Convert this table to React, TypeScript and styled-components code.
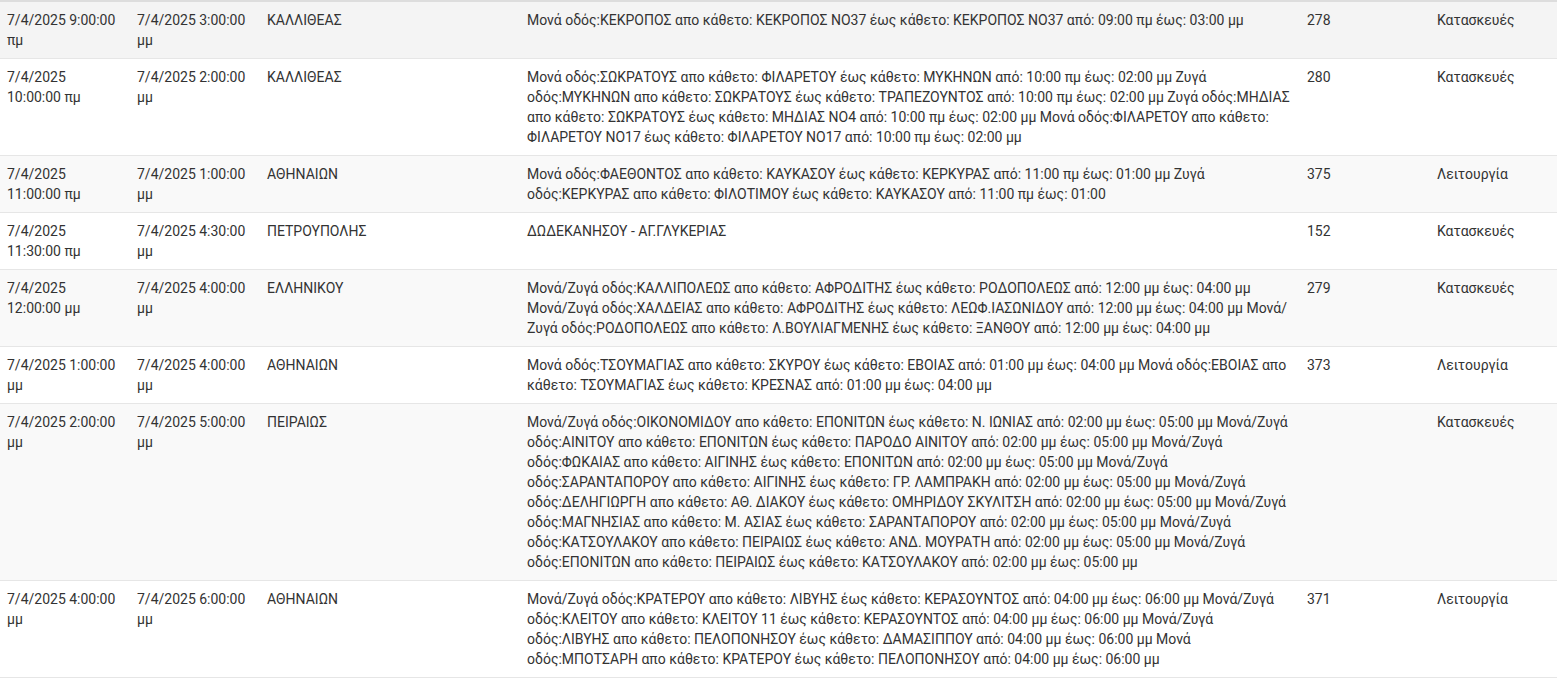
import styled, { createGlobalStyle } from 'styled-components'

const GlobalStyle = createGlobalStyle`
  html, body {
    margin: 0;
    padding: 0;
    background: #fff;
  }
  body {
    font-family: Roboto, "Noto Sans", "Liberation Sans", sans-serif;
    font-size: 14px;
    line-height: 20px;
    color: #333;
  }
`

type Closure = {
  start: string
  end: string
  area: string
  streets: string
  code: string
  type: string
}

const closures: Closure[] = [
  {
    start: '7/4/2025 9:00:00 πμ',
    end: '7/4/2025 3:00:00 μμ',
    area: 'ΚΑΛΛΙΘΕΑΣ',
    streets: 'Μονά οδός:ΚΕΚΡΟΠΟΣ απο κάθετο: ΚΕΚΡΟΠΟΣ ΝΟ37 έως κάθετο: ΚΕΚΡΟΠΟΣ ΝΟ37 από: 09:00 πμ έως: 03:00 μμ',
    code: '278',
    type: 'Κατασκευές',
  },
  {
    start: '7/4/2025 10:00:00 πμ',
    end: '7/4/2025 2:00:00 μμ',
    area: 'ΚΑΛΛΙΘΕΑΣ',
    streets: 'Μονά οδός:ΣΩΚΡΑΤΟΥΣ απο κάθετο: ΦΙΛΑΡΕΤΟΥ έως κάθετο: ΜΥΚΗΝΩΝ από: 10:00 πμ έως: 02:00 μμ Ζυγά οδός:ΜΥΚΗΝΩΝ απο κάθετο: ΣΩΚΡΑΤΟΥΣ έως κάθετο: ΤΡΑΠΕΖΟΥΝΤΟΣ από: 10:00 πμ έως: 02:00 μμ Ζυγά οδός:ΜΗΔΙΑΣ απο κάθετο: ΣΩΚΡΑΤΟΥΣ έως κάθετο: ΜΗΔΙΑΣ ΝΟ4 από: 10:00 πμ έως: 02:00 μμ Μονά οδός:ΦΙΛΑΡΕΤΟΥ απο κάθετο: ΦΙΛΑΡΕΤΟΥ ΝΟ17 έως κάθετο: ΦΙΛΑΡΕΤΟΥ ΝΟ17 από: 10:00 πμ έως: 02:00 μμ',
    code: '280',
    type: 'Κατασκευές',
  },
  {
    start: '7/4/2025 11:00:00 πμ',
    end: '7/4/2025 1:00:00 μμ',
    area: 'ΑΘΗΝΑΙΩΝ',
    streets: 'Μονά οδός:ΦΑΕΘΟΝΤΟΣ απο κάθετο: ΚΑΥΚΑΣΟΥ έως κάθετο: ΚΕΡΚΥΡΑΣ από: 11:00 πμ έως: 01:00 μμ Ζυγά οδός:ΚΕΡΚΥΡΑΣ απο κάθετο: ΦΙΛΟΤΙΜΟΥ έως κάθετο: ΚΑΥΚΑΣΟΥ από: 11:00 πμ έως: 01:00',
    code: '375',
    type: 'Λειτουργία',
  },
  {
    start: '7/4/2025 11:30:00 πμ',
    end: '7/4/2025 4:30:00 μμ',
    area: 'ΠΕΤΡΟΥΠΟΛΗΣ',
    streets: 'ΔΩΔΕΚΑΝΗΣΟΥ - ΑΓ.ΓΛΥΚΕΡΙΑΣ',
    code: '152',
    type: 'Κατασκευές',
  },
  {
    start: '7/4/2025 12:00:00 μμ',
    end: '7/4/2025 4:00:00 μμ',
    area: 'ΕΛΛΗΝΙΚΟΥ',
    streets: 'Μονά/Ζυγά οδός:ΚΑΛΛΙΠΟΛΕΩΣ απο κάθετο: ΑΦΡΟΔΙΤΗΣ έως κάθετο: ΡΟΔΟΠΟΛΕΩΣ από: 12:00 μμ έως: 04:00 μμ Μονά/Ζυγά οδός:ΧΑΛΔΕΙΑΣ απο κάθετο: ΑΦΡΟΔΙΤΗΣ έως κάθετο: ΛΕΩΦ.ΙΑΣΩΝΙΔΟΥ από: 12:00 μμ έως: 04:00 μμ Μονά/Ζυγά οδός:ΡΟΔΟΠΟΛΕΩΣ απο κάθετο: Λ.ΒΟΥΛΙΑΓΜΕΝΗΣ έως κάθετο: ΞΑΝΘΟΥ από: 12:00 μμ έως: 04:00 μμ',
    code: '279',
    type: 'Κατασκευές',
  },
  {
    start: '7/4/2025 1:00:00 μμ',
    end: '7/4/2025 4:00:00 μμ',
    area: 'ΑΘΗΝΑΙΩΝ',
    streets: 'Μονά οδός:ΤΣΟΥΜΑΓΙΑΣ απο κάθετο: ΣΚΥΡΟΥ έως κάθετο: ΕΒΟΙΑΣ από: 01:00 μμ έως: 04:00 μμ Μονά οδός:ΕΒΟΙΑΣ απο κάθετο: ΤΣΟΥΜΑΓΙΑΣ έως κάθετο: ΚΡΕΣΝΑΣ από: 01:00 μμ έως: 04:00 μμ',
    code: '373',
    type: 'Λειτουργία',
  },
  {
    start: '7/4/2025 2:00:00 μμ',
    end: '7/4/2025 5:00:00 μμ',
    area: 'ΠΕΙΡΑΙΩΣ',
    streets: 'Μονά/Ζυγά οδός:ΟΙΚΟΝΟΜΙΔΟΥ απο κάθετο: ΕΠΟΝΙΤΩΝ έως κάθετο: Ν. ΙΩΝΙΑΣ από: 02:00 μμ έως: 05:00 μμ Μονά/Ζυγά οδός:ΑΙΝΙΤΟΥ απο κάθετο: ΕΠΟΝΙΤΩΝ έως κάθετο: ΠΑΡΟΔΟ ΑΙΝΙΤΟΥ από: 02:00 μμ έως: 05:00 μμ Μονά/Ζυγά οδός:ΦΩΚΑΙΑΣ απο κάθετο: ΑΙΓΙΝΗΣ έως κάθετο: ΕΠΟΝΙΤΩΝ από: 02:00 μμ έως: 05:00 μμ Μονά/Ζυγά οδός:ΣΑΡΑΝΤΑΠΟΡΟΥ απο κάθετο: ΑΙΓΙΝΗΣ έως κάθετο: ΓΡ. ΛΑΜΠΡΑΚΗ από: 02:00 μμ έως: 05:00 μμ Μονά/Ζυγά οδός:ΔΕΛΗΓΙΩΡΓΗ απο κάθετο: ΑΘ. ΔΙΑΚΟΥ έως κάθετο: ΟΜΗΡΙΔΟΥ ΣΚΥΛΙΤΣΗ από: 02:00 μμ έως: 05:00 μμ Μονά/Ζυγά οδός:ΜΑΓΝΗΣΙΑΣ απο κάθετο: Μ. ΑΣΙΑΣ έως κάθετο: ΣΑΡΑΝΤΑΠΟΡΟΥ από: 02:00 μμ έως: 05:00 μμ Μονά/Ζυγά οδός:ΚΑΤΣΟΥΛΑΚΟΥ απο κάθετο: ΠΕΙΡΑΙΩΣ έως κάθετο: ΑΝΔ. ΜΟΥΡΑΤΗ από: 02:00 μμ έως: 05:00 μμ Μονά/Ζυγά οδός:ΕΠΟΝΙΤΩΝ απο κάθετο: ΠΕΙΡΑΙΩΣ έως κάθετο: ΚΑΤΣΟΥΛΑΚΟΥ από: 02:00 μμ έως: 05:00 μμ',
    code: '',
    type: 'Κατασκευές',
  },
  {
    start: '7/4/2025 4:00:00 μμ',
    end: '7/4/2025 6:00:00 μμ',
    area: 'ΑΘΗΝΑΙΩΝ',
    streets: 'Μονά/Ζυγά οδός:ΚΡΑΤΕΡΟΥ απο κάθετο: ΛΙΒΥΗΣ έως κάθετο: ΚΕΡΑΣΟΥΝΤΟΣ από: 04:00 μμ έως: 06:00 μμ Μονά/Ζυγά οδός:ΚΛΕΙΤΟΥ απο κάθετο: ΚΛΕΙΤΟΥ 11 έως κάθετο: ΚΕΡΑΣΟΥΝΤΟΣ από: 04:00 μμ έως: 06:00 μμ Μονά/Ζυγά οδός:ΛΙΒΥΗΣ απο κάθετο: ΠΕΛΟΠΟΝΗΣΟΥ έως κάθετο: ΔΑΜΑΣΙΠΠΟΥ από: 04:00 μμ έως: 06:00 μμ Μονά οδός:ΜΠΟΤΣΑΡΗ απο κάθετο: ΚΡΑΤΕΡΟΥ έως κάθετο: ΠΕΛΟΠΟΝΗΣΟΥ από: 04:00 μμ έως: 06:00 μμ',
    code: '371',
    type: 'Λειτουργία',
  },
]

const columnWidths = [130, 130, 260, 780, 130]

export default function App() {
  return (
    <>
      <GlobalStyle />
      <Table>
        <colgroup>
          {columnWidths.map((w, i) => (
            <Col key={i} $width={w} />
          ))}
          <Col />
        </colgroup>
        <tbody>
          {closures.map((c, i) => (
            <Row key={i} $striped={i % 2 === 0} $hover={i === 0}>
              <Cell>{c.start}</Cell>
              <Cell>{c.end}</Cell>
              <Cell>{c.area}</Cell>
              <Cell>{c.streets}</Cell>
              <Cell>{c.code}</Cell>
              <Cell>{c.type}</Cell>
            </Row>
          ))}
        </tbody>
      </Table>
    </>
  )
}

const Table = styled.table`
  width: 1557px;
  table-layout: fixed;
  border-collapse: collapse;
  border-spacing: 0;
  border-top: 2px solid #dddddd;
  border-bottom: 1px solid #e6e6e6;
`

const Col = styled.col<{ $width?: number }>`
  width: ${(p) => (p.$width ? `${p.$width}px` : 'auto')};
`

const Row = styled.tr<{ $striped: boolean; $hover: boolean }>`
  background: ${(p) => (p.$hover ? '#f4f4f4' : p.$striped ? '#f9f9f9' : '#ffffff')};
`

const Cell = styled.td`
  padding: 8px 8px 8px 7px;
  vertical-align: top;
  text-align: left;
  word-wrap: break-word;
  border-top: 1px solid #e6e6e6;
`
